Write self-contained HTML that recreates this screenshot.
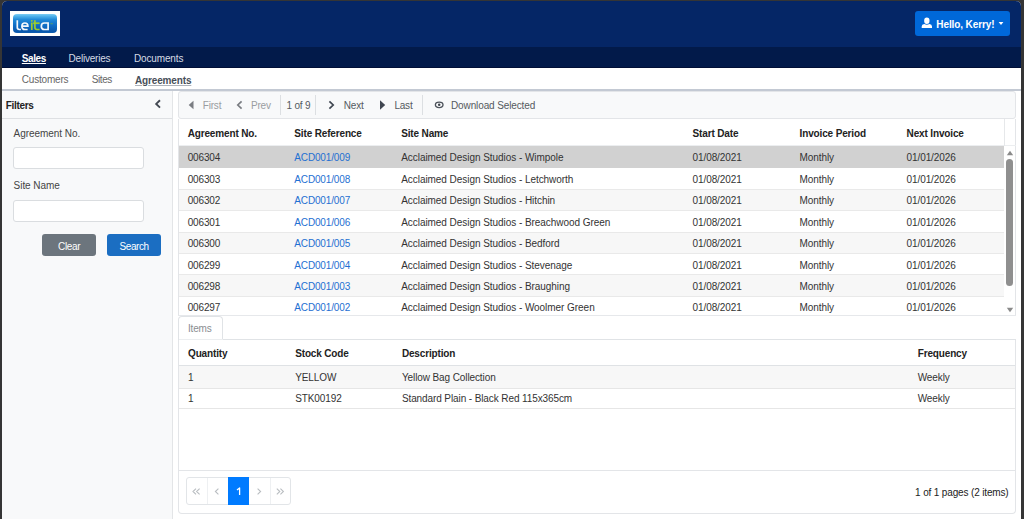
<!DOCTYPE html>
<html><head><meta charset="utf-8">
<style>
*{box-sizing:border-box;margin:0;padding:0}
html,body{width:1024px;height:519px;overflow:hidden;background:#353535}
body{font-family:"Liberation Sans",sans-serif;font-size:10px;color:#444;position:relative}
.b{position:absolute}
.t{position:absolute;white-space:nowrap}
</style></head><body>

<div class="b" style="left:2px;top:1px;width:1019px;height:529px;background:#fff;border-radius:5px 5px 0 0;overflow:hidden"></div>
<div class="b" style="left:2px;top:1px;width:1019px;height:46px;background:#052666;border-radius:5px 5px 0 0"></div>
<div class="b" style="left:10px;top:11px;width:50px;height:25px;background:#fff"></div>
<div class="b" style="left:13px;top:14px;width:44px;height:19px;border-radius:4px;background:linear-gradient(#7ccdf4,#4fb1ea 12%,#2089d8 30%,#106dc5 60%,#0a57ac 92%,#0d5fb3)"></div>
<svg class="b" style="left:0;top:0" width="70" height="40" viewBox="0 0 70 40"><g fill="none" stroke="#f4f8fc" stroke-width="1.7" stroke-linecap="butt"><path d="M17.3 20.2 V27.6 Q17.3 29.5 19.3 29.5 H20.9"/><path d="M21.9 26.2 H27.9 Q27.9 23.0 24.9 23.0 Q21.9 23.0 21.9 26.2 Q21.9 29.5 24.9 29.5 H27.6"/><path d="M41.3 26.2 Q41.3 23.0 44.4 23.0 H48.1 V29.5 H44.4 Q41.3 29.5 41.3 26.2 Z"/></g><g fill="none" stroke="#9ccc2e" stroke-width="1.7"><path d="M31.8 22.6 V30"/><path d="M34.9 20.2 V27.6 Q34.9 29.5 36.9 29.5 H39.6"/><path d="M33.2 23.2 H39.6"/></g><rect x="31.0" y="20.1" width="1.6" height="1.5" fill="#9ccc2e"/><rect x="50.4" y="23.3" width="2.4" height="0.9" fill="#7fb33a" opacity="0.7"/></svg>
<div class="b" style="left:915px;top:11px;width:95px;height:25px;border-radius:3px;background:#0068d9"></div>
<div class="t" style="left:936.30px;top:19.84px;font-size:10px;line-height:10px;color:#fff;font-weight:bold;letter-spacing:-0.1px;">Hello, Kerry!</div>
<svg class="b" style="left:916px;top:14px" width="20" height="18" viewBox="916 14 20 18"><ellipse cx="926.85" cy="20.8" rx="2.7" ry="3.2" fill="#fff"/><path d="M921.7 28 V26.6 Q921.7 24.3 924.3 24.1 Q926.85 25.6 929.4 24.1 Q932.0 24.3 932.0 26.6 V28 Z" fill="#fff"/></svg>
<svg class="b" style="left:998px;top:21px" width="6" height="5" viewBox="0 0 6 5"><path d="M0.6 1 L5.4 1 L3 4 Z" fill="#fff"/></svg>
<div class="b" style="left:2px;top:47px;width:1019px;height:21px;background:#021a4a;border-bottom:1px solid #010f36"></div>
<div class="t" style="left:21.80px;top:54.14px;font-size:10px;line-height:10px;color:#fff;font-weight:bold;letter-spacing:-0.4px;"><u>Sales</u></div>
<div class="t" style="left:68.50px;top:54.14px;font-size:10px;line-height:10px;color:#d5dae4;letter-spacing:-0.2px;">Deliveries</div>
<div class="t" style="left:134.00px;top:54.14px;font-size:10px;line-height:10px;color:#d5dae4;letter-spacing:-0.15px;">Documents</div>
<div class="b" style="left:2px;top:68px;width:1019px;height:21px;background:#fff"></div>
<div class="b" style="left:2px;top:89px;width:1019px;height:2px;background:#c3c9d3"></div>
<div class="t" style="left:21.80px;top:75.23px;font-size:10px;line-height:10px;color:#666;letter-spacing:-0.2px;">Customers</div>
<div class="t" style="left:91.70px;top:75.23px;font-size:10px;line-height:10px;color:#666;letter-spacing:-0.4px;">Sites</div>
<div class="t" style="left:135.00px;top:75.73px;font-size:10px;line-height:10px;color:#474e58;font-weight:bold;letter-spacing:-0.15px;"><u style="text-decoration-color:#aeb3ba">Agreements</u></div>
<div class="b" style="left:2px;top:91px;width:171px;height:439px;background:#f8f9fa;border-right:1px solid #e3e5e7"></div>
<div class="b" style="left:2px;top:118px;width:170px;height:1px;background:#dee0e3"></div>
<div class="t" style="left:5.70px;top:100.94px;font-size:10px;line-height:10px;color:#222;font-weight:bold;letter-spacing:-0.3px;">Filters</div>
<svg class="b" style="left:154px;top:99px" width="9" height="11" viewBox="0 0 9 11"><path d="M6.0 1.2 L2.2 4.9 L6.0 8.6" fill="none" stroke="#434952" stroke-width="1.9"/></svg>
<div class="t" style="left:13.60px;top:129.03px;font-size:10px;line-height:10px;color:#444;letter-spacing:-0.05px;">Agreement No.</div>
<div class="b" style="left:13px;top:147px;width:131px;height:22px;background:#fff;border:1px solid #dadde0;border-radius:3px"></div>
<div class="t" style="left:13.60px;top:181.44px;font-size:10px;line-height:10px;color:#444;letter-spacing:-0.05px;">Site Name</div>
<div class="b" style="left:13px;top:200px;width:131px;height:22px;background:#fff;border:1px solid #dadde0;border-radius:3px"></div>
<div class="b" style="left:42px;top:234px;width:54px;height:22px;background:#6c757d;border-radius:3px"></div>
<div class="t" style="left:58.00px;top:241.53px;font-size:10px;line-height:10px;color:#fff;letter-spacing:-0.3px;">Clear</div>
<div class="b" style="left:107px;top:234px;width:54px;height:22px;background:#1b6ec2;border-radius:3px"></div>
<div class="t" style="left:119.50px;top:241.53px;font-size:10px;line-height:10px;color:#fff;letter-spacing:-0.4px;">Search</div>
<div class="b" style="left:178px;top:91px;width:838px;height:28px;background:#f8f9fa;border:1px solid #e3e5e8;border-radius:3px"></div>
<svg class="b" style="left:188px;top:100px" width="6" height="10" viewBox="0 0 6 10"><path d="M5.5 0.7 L0.7 5 L5.5 9.3 Z" fill="#7a7d82"/></svg>
<div class="t" style="left:202.80px;top:101.03px;font-size:10px;line-height:10px;color:#9a9da1;letter-spacing:-0.2px;">First</div>
<svg class="b" style="left:236px;top:100px" width="7" height="10" viewBox="0 0 7 10"><path d="M5.6 1.4 L1.8 5 L5.6 8.6" fill="none" stroke="#7a7d82" stroke-width="1.7"/></svg>
<div class="t" style="left:251.00px;top:101.03px;font-size:10px;line-height:10px;color:#9a9da1;letter-spacing:-0.2px;">Prev</div>
<div class="b" style="left:280px;top:95px;width:1px;height:20px;background:#dcdfe2"></div>
<div class="t" style="left:286.40px;top:101.03px;font-size:10px;line-height:10px;color:#555a60;letter-spacing:-0.15px;">1 of 9</div>
<div class="b" style="left:315px;top:95px;width:1px;height:20px;background:#dcdfe2"></div>
<svg class="b" style="left:328px;top:100px" width="7" height="10" viewBox="0 0 7 10"><path d="M1.4 1.4 L5.2 5 L1.4 8.6" fill="none" stroke="#3f4650" stroke-width="1.7"/></svg>
<div class="t" style="left:343.80px;top:101.03px;font-size:10px;line-height:10px;color:#555a60;letter-spacing:-0.2px;">Next</div>
<svg class="b" style="left:379px;top:100px" width="7" height="10" viewBox="0 0 7 10"><path d="M1 0.3 L6.2 5 L1 9.7 Z" fill="#3f4650"/></svg>
<div class="t" style="left:394.40px;top:101.03px;font-size:10px;line-height:10px;color:#555a60;letter-spacing:-0.2px;">Last</div>
<div class="b" style="left:422px;top:95px;width:1px;height:20px;background:#dcdfe2"></div>
<svg class="b" style="left:430px;top:98px" width="18" height="14" viewBox="430 98 18 14"><ellipse cx="439.2" cy="104.8" rx="3.8" ry="2.75" fill="none" stroke="#4c525a" stroke-width="1.35"/><circle cx="439.2" cy="104.8" r="1.25" fill="#3f454d"/></svg>
<div class="t" style="left:451.00px;top:101.03px;font-size:10px;line-height:10px;color:#555a60;letter-spacing:-0.12px;">Download Selected</div>
<div class="b" style="left:178px;top:119px;width:838px;height:197px;background:#fff;border-left:1px solid #e3e5e8;border-right:1px solid #e3e5e8"></div>
<div class="t" style="left:187.70px;top:129.34px;font-size:10px;line-height:10px;color:#222;font-weight:bold;letter-spacing:-0.15px;">Agreement No.</div>
<div class="t" style="left:294.30px;top:129.34px;font-size:10px;line-height:10px;color:#222;font-weight:bold;letter-spacing:-0.15px;">Site Reference</div>
<div class="t" style="left:401.20px;top:129.34px;font-size:10px;line-height:10px;color:#222;font-weight:bold;letter-spacing:-0.15px;">Site Name</div>
<div class="t" style="left:692.60px;top:129.34px;font-size:10px;line-height:10px;color:#222;font-weight:bold;letter-spacing:-0.15px;">Start Date</div>
<div class="t" style="left:799.60px;top:129.34px;font-size:10px;line-height:10px;color:#222;font-weight:bold;letter-spacing:-0.15px;">Invoice Period</div>
<div class="t" style="left:906.60px;top:129.34px;font-size:10px;line-height:10px;color:#222;font-weight:bold;letter-spacing:-0.15px;">Next Invoice</div>
<div class="b" style="left:179px;top:145px;width:837px;height:1px;background:#eceef0"></div>
<div class="b" style="left:1004px;top:119px;width:1px;height:27px;background:#e6e8ea"></div>
<div class="b" style="left:179px;top:146px;width:825px;height:22px;background:#d1d1d1"></div>
<div class="t" style="left:187.70px;top:153.23px;font-size:10px;line-height:10px;color:#333;letter-spacing:-0.15px;">006304</div>
<div class="t" style="left:294.30px;top:153.23px;font-size:10px;line-height:10px;color:#1f70d2;letter-spacing:-0.15px;">ACD001/009</div>
<div class="t" style="left:401.20px;top:153.23px;font-size:10px;line-height:10px;color:#333;letter-spacing:-0.05px;">Acclaimed Design Studios - Wimpole</div>
<div class="t" style="left:692.60px;top:153.23px;font-size:10px;line-height:10px;color:#333;letter-spacing:-0.1px;">01/08/2021</div>
<div class="t" style="left:799.60px;top:153.23px;font-size:10px;line-height:10px;color:#333;letter-spacing:-0.1px;">Monthly</div>
<div class="t" style="left:906.60px;top:153.23px;font-size:10px;line-height:10px;color:#333;letter-spacing:-0.1px;">01/01/2026</div>
<div class="b" style="left:179px;top:168px;width:825px;height:21px;background:#fff"></div>
<div class="b" style="left:179px;top:189px;width:825px;height:1px;background:#e9e9e9"></div>
<div class="t" style="left:187.70px;top:175.10px;font-size:10px;line-height:10px;color:#333;letter-spacing:-0.15px;">006303</div>
<div class="t" style="left:294.30px;top:175.10px;font-size:10px;line-height:10px;color:#1f70d2;letter-spacing:-0.15px;">ACD001/008</div>
<div class="t" style="left:401.20px;top:175.10px;font-size:10px;line-height:10px;color:#333;letter-spacing:-0.05px;">Acclaimed Design Studios - Letchworth</div>
<div class="t" style="left:692.60px;top:175.10px;font-size:10px;line-height:10px;color:#333;letter-spacing:-0.1px;">01/08/2021</div>
<div class="t" style="left:799.60px;top:175.10px;font-size:10px;line-height:10px;color:#333;letter-spacing:-0.1px;">Monthly</div>
<div class="t" style="left:906.60px;top:175.10px;font-size:10px;line-height:10px;color:#333;letter-spacing:-0.1px;">01/01/2026</div>
<div class="b" style="left:179px;top:190px;width:825px;height:20px;background:#f7f7f7"></div>
<div class="b" style="left:179px;top:210px;width:825px;height:1px;background:#e9e9e9"></div>
<div class="t" style="left:187.70px;top:196.47px;font-size:10px;line-height:10px;color:#333;letter-spacing:-0.15px;">006302</div>
<div class="t" style="left:294.30px;top:196.47px;font-size:10px;line-height:10px;color:#1f70d2;letter-spacing:-0.15px;">ACD001/007</div>
<div class="t" style="left:401.20px;top:196.47px;font-size:10px;line-height:10px;color:#333;letter-spacing:-0.05px;">Acclaimed Design Studios - Hitchin</div>
<div class="t" style="left:692.60px;top:196.47px;font-size:10px;line-height:10px;color:#333;letter-spacing:-0.1px;">01/08/2021</div>
<div class="t" style="left:799.60px;top:196.47px;font-size:10px;line-height:10px;color:#333;letter-spacing:-0.1px;">Monthly</div>
<div class="t" style="left:906.60px;top:196.47px;font-size:10px;line-height:10px;color:#333;letter-spacing:-0.1px;">01/01/2026</div>
<div class="b" style="left:179px;top:211px;width:825px;height:21px;background:#fff"></div>
<div class="b" style="left:179px;top:232px;width:825px;height:1px;background:#e9e9e9"></div>
<div class="t" style="left:187.70px;top:217.84px;font-size:10px;line-height:10px;color:#333;letter-spacing:-0.15px;">006301</div>
<div class="t" style="left:294.30px;top:217.84px;font-size:10px;line-height:10px;color:#1f70d2;letter-spacing:-0.15px;">ACD001/006</div>
<div class="t" style="left:401.20px;top:217.84px;font-size:10px;line-height:10px;color:#333;letter-spacing:-0.05px;">Acclaimed Design Studios - Breachwood Green</div>
<div class="t" style="left:692.60px;top:217.84px;font-size:10px;line-height:10px;color:#333;letter-spacing:-0.1px;">01/08/2021</div>
<div class="t" style="left:799.60px;top:217.84px;font-size:10px;line-height:10px;color:#333;letter-spacing:-0.1px;">Monthly</div>
<div class="t" style="left:906.60px;top:217.84px;font-size:10px;line-height:10px;color:#333;letter-spacing:-0.1px;">01/01/2026</div>
<div class="b" style="left:179px;top:233px;width:825px;height:20px;background:#f7f7f7"></div>
<div class="b" style="left:179px;top:253px;width:825px;height:1px;background:#e9e9e9"></div>
<div class="t" style="left:187.70px;top:239.22px;font-size:10px;line-height:10px;color:#333;letter-spacing:-0.15px;">006300</div>
<div class="t" style="left:294.30px;top:239.22px;font-size:10px;line-height:10px;color:#1f70d2;letter-spacing:-0.15px;">ACD001/005</div>
<div class="t" style="left:401.20px;top:239.22px;font-size:10px;line-height:10px;color:#333;letter-spacing:-0.05px;">Acclaimed Design Studios - Bedford</div>
<div class="t" style="left:692.60px;top:239.22px;font-size:10px;line-height:10px;color:#333;letter-spacing:-0.1px;">01/08/2021</div>
<div class="t" style="left:799.60px;top:239.22px;font-size:10px;line-height:10px;color:#333;letter-spacing:-0.1px;">Monthly</div>
<div class="t" style="left:906.60px;top:239.22px;font-size:10px;line-height:10px;color:#333;letter-spacing:-0.1px;">01/01/2026</div>
<div class="b" style="left:179px;top:254px;width:825px;height:20px;background:#fff"></div>
<div class="b" style="left:179px;top:274px;width:825px;height:1px;background:#e9e9e9"></div>
<div class="t" style="left:187.70px;top:260.59px;font-size:10px;line-height:10px;color:#333;letter-spacing:-0.15px;">006299</div>
<div class="t" style="left:294.30px;top:260.59px;font-size:10px;line-height:10px;color:#1f70d2;letter-spacing:-0.15px;">ACD001/004</div>
<div class="t" style="left:401.20px;top:260.59px;font-size:10px;line-height:10px;color:#333;letter-spacing:-0.05px;">Acclaimed Design Studios - Stevenage</div>
<div class="t" style="left:692.60px;top:260.59px;font-size:10px;line-height:10px;color:#333;letter-spacing:-0.1px;">01/08/2021</div>
<div class="t" style="left:799.60px;top:260.59px;font-size:10px;line-height:10px;color:#333;letter-spacing:-0.1px;">Monthly</div>
<div class="t" style="left:906.60px;top:260.59px;font-size:10px;line-height:10px;color:#333;letter-spacing:-0.1px;">01/01/2026</div>
<div class="b" style="left:179px;top:275px;width:825px;height:21px;background:#f7f7f7"></div>
<div class="b" style="left:179px;top:296px;width:825px;height:1px;background:#e9e9e9"></div>
<div class="t" style="left:187.70px;top:281.95px;font-size:10px;line-height:10px;color:#333;letter-spacing:-0.15px;">006298</div>
<div class="t" style="left:294.30px;top:281.95px;font-size:10px;line-height:10px;color:#1f70d2;letter-spacing:-0.15px;">ACD001/003</div>
<div class="t" style="left:401.20px;top:281.95px;font-size:10px;line-height:10px;color:#333;letter-spacing:-0.05px;">Acclaimed Design Studios - Braughing</div>
<div class="t" style="left:692.60px;top:281.95px;font-size:10px;line-height:10px;color:#333;letter-spacing:-0.1px;">01/08/2021</div>
<div class="t" style="left:799.60px;top:281.95px;font-size:10px;line-height:10px;color:#333;letter-spacing:-0.1px;">Monthly</div>
<div class="t" style="left:906.60px;top:281.95px;font-size:10px;line-height:10px;color:#333;letter-spacing:-0.1px;">01/01/2026</div>
<div class="b" style="left:179px;top:297px;width:825px;height:18px;background:#fff"></div>
<div class="t" style="left:187.70px;top:303.32px;font-size:10px;line-height:10px;color:#333;letter-spacing:-0.15px;">006297</div>
<div class="t" style="left:294.30px;top:303.32px;font-size:10px;line-height:10px;color:#1f70d2;letter-spacing:-0.15px;">ACD001/002</div>
<div class="t" style="left:401.20px;top:303.32px;font-size:10px;line-height:10px;color:#333;letter-spacing:-0.05px;">Acclaimed Design Studios - Woolmer Green</div>
<div class="t" style="left:692.60px;top:303.32px;font-size:10px;line-height:10px;color:#333;letter-spacing:-0.1px;">01/08/2021</div>
<div class="t" style="left:799.60px;top:303.32px;font-size:10px;line-height:10px;color:#333;letter-spacing:-0.1px;">Monthly</div>
<div class="t" style="left:906.60px;top:303.32px;font-size:10px;line-height:10px;color:#333;letter-spacing:-0.1px;">01/01/2026</div>
<div class="b" style="left:1004px;top:146px;width:11px;height:169px;background:#fff"></div>
<svg class="b" style="left:1006px;top:150px" width="8" height="6" viewBox="0 0 8 6"><path d="M0.8 5.2 L4 0.8 L7.2 5.2 Z" fill="#8a8a8a"/></svg>
<div class="b" style="left:1006px;top:159px;width:7px;height:127px;background:#8f8f8f;border-radius:3.5px"></div>
<svg class="b" style="left:1006px;top:307px" width="8" height="6" viewBox="0 0 8 6"><path d="M0.8 0.8 L4 5.2 L7.2 0.8 Z" fill="#8a8a8a"/></svg>
<div class="b" style="left:178px;top:315px;width:838px;height:1px;background:#e6e8eb"></div>
<div class="b" style="left:178px;top:316px;width:45px;height:24px;background:#fff;border:1px solid #e0e3e6;border-bottom:none;border-radius:4px 4px 0 0"></div>
<div class="t" style="left:188.00px;top:324.24px;font-size:10px;line-height:10px;color:#8a8d91;letter-spacing:-0.2px;">Items</div>
<div class="b" style="left:179px;top:339px;width:44px;height:1px;background:#eceef0"></div>
<div class="b" style="left:223px;top:339px;width:793px;height:1px;background:#e0e3e6"></div>
<div class="b" style="left:178px;top:340px;width:838px;height:174px;background:#fff;border:1px solid #e3e5e8;border-top:none;border-radius:0 0 4px 4px"></div>
<div class="t" style="left:188.00px;top:349.14px;font-size:10px;line-height:10px;color:#222;font-weight:bold;letter-spacing:-0.15px;">Quantity</div>
<div class="t" style="left:295.20px;top:349.14px;font-size:10px;line-height:10px;color:#222;font-weight:bold;letter-spacing:-0.15px;">Stock Code</div>
<div class="t" style="left:401.90px;top:349.14px;font-size:10px;line-height:10px;color:#222;font-weight:bold;letter-spacing:-0.15px;">Description</div>
<div class="t" style="left:917.70px;top:349.14px;font-size:10px;line-height:10px;color:#222;font-weight:bold;letter-spacing:-0.15px;">Frequency</div>
<div class="b" style="left:179px;top:365px;width:836px;height:1px;background:#dfe2e5"></div>
<div class="b" style="left:179px;top:366px;width:836px;height:23px;background:#f7f7f7;border-bottom:1px solid #e6e6e6"></div>
<div class="b" style="left:179px;top:389px;width:836px;height:20px;background:#fff;border-bottom:1px solid #e6e6e6"></div>
<div class="t" style="left:188.00px;top:373.04px;font-size:10px;line-height:10px;color:#333;letter-spacing:-0.1px;">1</div>
<div class="t" style="left:295.20px;top:373.04px;font-size:10px;line-height:10px;color:#333;letter-spacing:-0.1px;">YELLOW</div>
<div class="t" style="left:401.90px;top:373.04px;font-size:10px;line-height:10px;color:#333;letter-spacing:-0.1px;">Yellow Bag Collection</div>
<div class="t" style="left:917.70px;top:373.04px;font-size:10px;line-height:10px;color:#333;letter-spacing:-0.1px;">Weekly</div>
<div class="t" style="left:188.00px;top:394.14px;font-size:10px;line-height:10px;color:#333;letter-spacing:-0.1px;">1</div>
<div class="t" style="left:295.20px;top:394.14px;font-size:10px;line-height:10px;color:#333;letter-spacing:-0.1px;">STK00192</div>
<div class="t" style="left:401.90px;top:394.14px;font-size:10px;line-height:10px;color:#333;letter-spacing:-0.1px;">Standard Plain - Black Red 115x365cm</div>
<div class="t" style="left:917.70px;top:394.14px;font-size:10px;line-height:10px;color:#333;letter-spacing:-0.1px;">Weekly</div>
<div class="b" style="left:179px;top:470px;width:836px;height:1px;background:#e3e5e8"></div>
<div class="b" style="left:186px;top:477px;width:105px;height:28px;background:#fff;border:1px solid #e2e5e8;border-radius:3px"></div>
<div class="b" style="left:207px;top:478px;width:1px;height:26px;background:#eef0f2"></div>
<div class="b" style="left:270px;top:478px;width:1px;height:26px;background:#eef0f2"></div>
<div class="b" style="left:228px;top:477px;width:21px;height:28px;background:#007bff"></div>
<svg class="b" style="left:186px;top:477px" width="105" height="28" viewBox="186 477 105 28"><g fill="none" stroke="#b9bdc1" stroke-width="1.1"><path d="M196 488.6 L193 491.5 L196 494.4 M199.6 488.6 L196.6 491.5 L199.6 494.4"/><path d="M218.4 488.6 L215.4 491.5 L218.4 494.4"/><path d="M257.6 488.6 L260.6 491.5 L257.6 494.4"/><path d="M276.8 488.6 L279.8 491.5 L276.8 494.4 M280.4 488.6 L283.4 491.5 L280.4 494.4"/></g></svg>
<svg class="b" style="left:228px;top:477px" width="21" height="28" viewBox="228 477 21 28"><path d="M237.0 489.9 L239.6 487.9 V495" fill="none" stroke="#fff" stroke-width="1.3" stroke-linejoin="round"/></svg>
<div class="t" style="left:915.10px;top:487.54px;font-size:10px;line-height:10px;color:#222;letter-spacing:-0.15px;">1 of 1 pages (2 items)</div>
</body></html>
